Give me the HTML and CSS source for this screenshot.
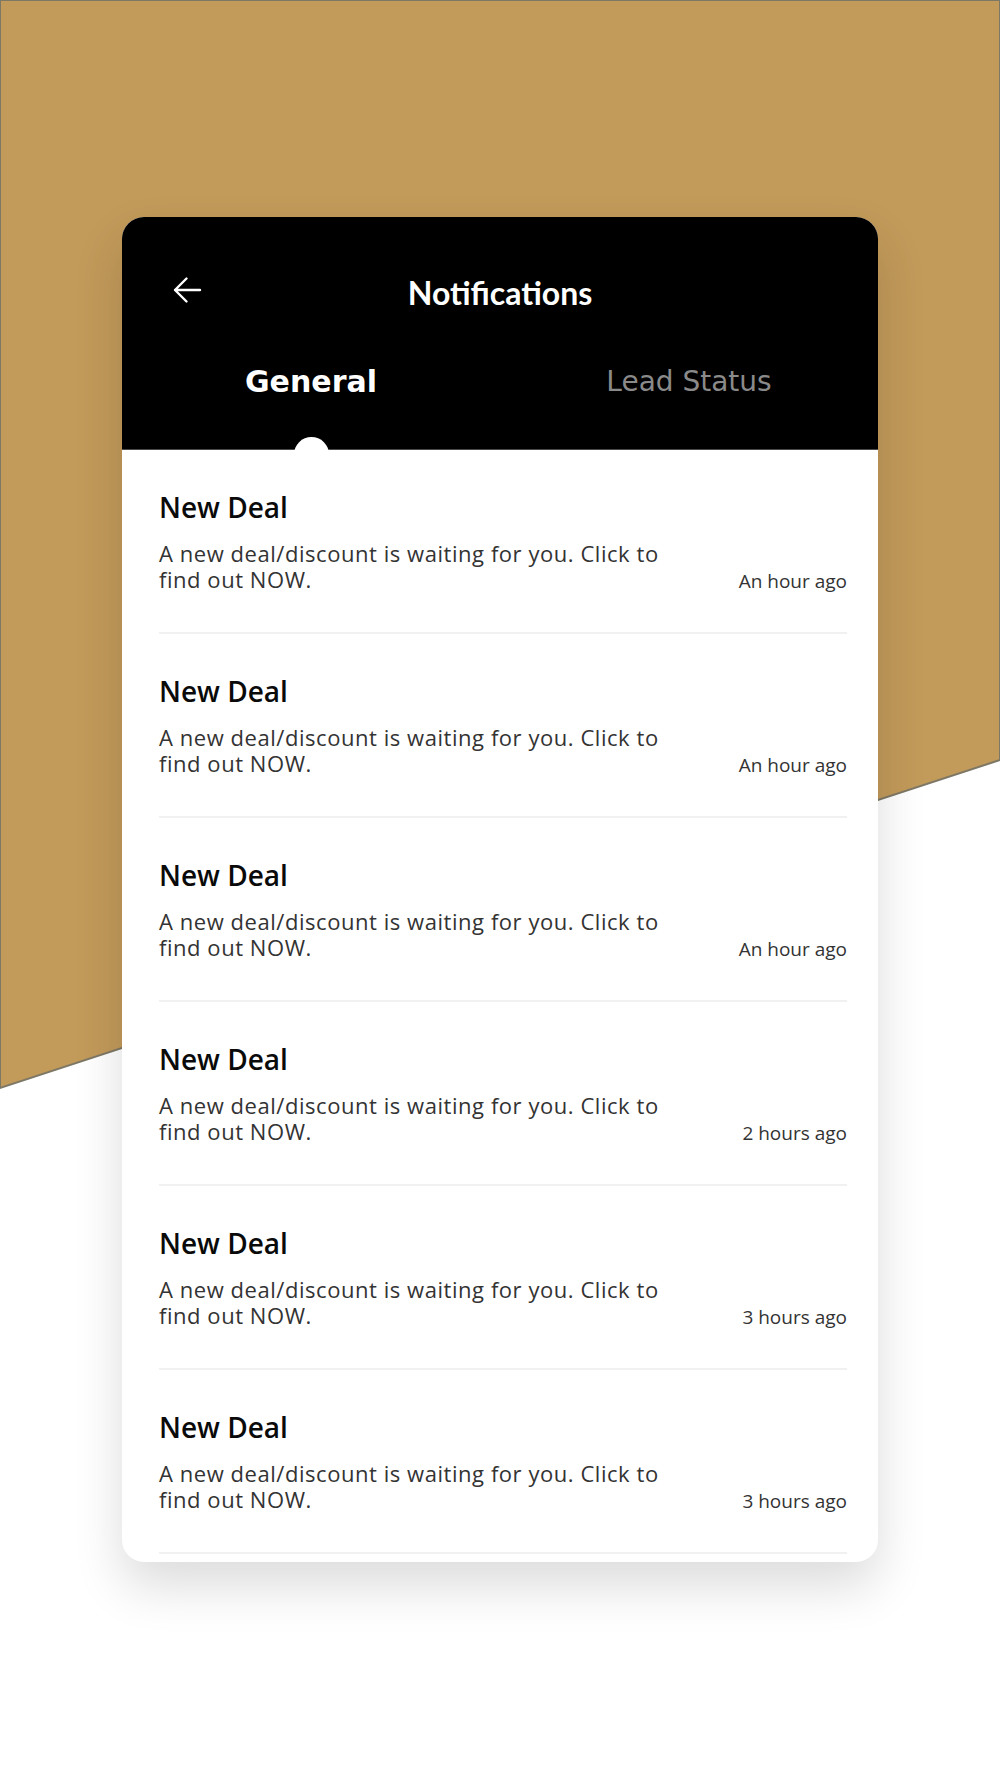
FILE: index.html
```html
<!DOCTYPE html>
<html lang="en">
<head>
    <meta charset="UTF-8">
    <meta name="viewport" content="width=device-width, initial-scale=1.0">
    <title>Notifications</title>
    <link rel="stylesheet" href="styles.css">
</head>
<body>
    <svg class="backdrop" width="1000" height="1100" viewBox="0 0 1000 1100">
        <polygon points="0,0 1000,0 1000,760 0,1088" fill="#c29a5a" stroke="#7d7766" stroke-width="2"/>
    </svg>

    <div class="card">
        <div class="header">
            <div class="topbar">
                <a class="back" href="#">
                    <svg width="30" height="30" viewBox="0 0 30 30">
                        <path d="M28 15 H3 M14.5 3.5 L3 15 L14.5 26.5" fill="none" stroke="#fff" stroke-width="2.4" stroke-linecap="round" stroke-linejoin="round"/>
                    </svg>
                </a>
                <h1>Notifications</h1>
                <span></span>
            </div>
            <div class="tabs">
                <div class="tab active">General</div>
                <div class="tab">Lead Status</div>
            </div>
        </div>

        <div class="list">
            <div class="item">
                <h2>New Deal</h2>
                <div class="item-row">
                    <p>A new deal/discount is waiting for you. Click to find out NOW.</p>
                    <span class="time">An hour ago</span>
                </div>
            </div>
            <div class="item">
                <h2>New Deal</h2>
                <div class="item-row">
                    <p>A new deal/discount is waiting for you. Click to find out NOW.</p>
                    <span class="time">An hour ago</span>
                </div>
            </div>
            <div class="item">
                <h2>New Deal</h2>
                <div class="item-row">
                    <p>A new deal/discount is waiting for you. Click to find out NOW.</p>
                    <span class="time">An hour ago</span>
                </div>
            </div>
            <div class="item">
                <h2>New Deal</h2>
                <div class="item-row">
                    <p>A new deal/discount is waiting for you. Click to find out NOW.</p>
                    <span class="time">2 hours ago</span>
                </div>
            </div>
            <div class="item">
                <h2>New Deal</h2>
                <div class="item-row">
                    <p>A new deal/discount is waiting for you. Click to find out NOW.</p>
                    <span class="time">3 hours ago</span>
                </div>
            </div>
            <div class="item">
                <h2>New Deal</h2>
                <div class="item-row">
                    <p>A new deal/discount is waiting for you. Click to find out NOW.</p>
                    <span class="time">3 hours ago</span>
                </div>
            </div>
        </div>
    </div>
</body>
</html>
```

FILE: styles.css
```css
body, html {
    margin: 0;
    padding: 0;
    background-color: #fff;
    font-family: "Open Sans", Arial, sans-serif;
}
body {
    min-height: 1778px;
    overflow: hidden;
}
.backdrop {
    position: absolute;
    top: 0;
    left: 0;
}
.card {
    position: relative;
    width: 756px;
    margin: 217px auto 0;
    background: #fff;
    border-radius: 22px;
    box-shadow: 0 24px 50px rgba(0, 0, 0, 0.14);
    padding-bottom: 8px;
}
.header {
    background: #000;
    border-radius: 22px 22px 0 0;
    padding: 56px 0 47px;
    border-bottom: 1px solid #4a4a4a;
}
.topbar {
    display: grid;
    grid-template-columns: 1fr auto 1fr;
    align-items: center;
    height: 40px;
    padding: 0 50px;
}
.back {
    display: flex;
    width: 30px;
    height: 30px;
    margin-top: -7px;
}
.topbar h1 {
    margin: 0;
    color: #fff;
    font-family: Lato, Arial, sans-serif;
    font-weight: 700;
    font-size: 32px;
    line-height: 40px;
}
.tabs {
    display: flex;
    margin-top: 49px;
}
.tab {
    position: relative;
    flex: 1;
    text-align: center;
    font-family: "DejaVu Sans", sans-serif;
    font-size: 28px;
    line-height: 40px;
    color: #8a8a8a;
}
.tab.active {
    color: #fff;
    font-weight: bold;
    font-size: 30px;
}
.tab.active::after {
    content: "";
    position: absolute;
    z-index: 2;
    left: 50%;
    top: calc(100% + 35px);
    width: 35px;
    height: 35px;
    margin-left: -17px;
    border-radius: 50%;
    background: #fff;
}
.item {
    margin: 0 31px 0 37px;
    padding: 40px 0 40px;
    border-bottom: 2px solid #f1f1f1;
}
.item h2 {
    margin: 0;
    font-size: 28px;
    font-weight: 600;
    line-height: 34px;
    color: #0a0a0a;
}
.item-row {
    display: flex;
    justify-content: space-between;
    align-items: flex-end;
    margin-top: 16px;
}
.item-row p {
    margin: 0;
    width: 525px;
    font-size: 22px;
    letter-spacing: 0.55px;
    line-height: 26px;
    color: #333;
}
.time {
    font-size: 19px;
    line-height: 22px;
    color: #333;
}
```
